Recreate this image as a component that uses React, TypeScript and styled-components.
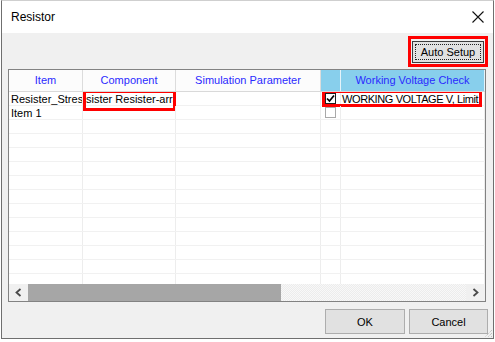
import React from 'react';
import styled, { createGlobalStyle } from 'styled-components';

const Global = createGlobalStyle`
  html, body { margin: 0; padding: 0; background: #ffffff; }
  body { font-family: "Liberation Sans", Arial, sans-serif; }
  * { box-sizing: border-box; }
`;

const COLS = '74px 93px 145px 20px 144px';

const Window = styled.div`
  margin-left: 1px;
  width: 493px;
  height: 339px;
  border: 1px solid #6f6f6f;
  border-top-color: #cfcfcf;
  display: flex;
  flex-direction: column;
  background: #f0f0f0;
`;

const TitleBar = styled.div`
  flex: none;
  height: 32px;
  background: #ffffff;
  display: flex;
  align-items: center;
  justify-content: space-between;
  padding: 0 9px 0 9px;
`;

const Title = styled.span`
  font-size: 12px;
  color: #000;
`;

const Body = styled.div`
  position: relative;
  flex: 1;
  display: flex;
  flex-direction: column;
  padding: 3px 5px 4px 6px;
  font-size: 11px;
`;

const Toolbar = styled.div`
  height: 31px;
  display: flex;
  justify-content: flex-end;
`;

const RedFrame = styled.div`
  width: 80px;
  height: 31px;
  border: 3px solid #ff0000;
  display: flex;
  align-items: center;
  justify-content: center;
`;

const Button = styled.button<{ $w: number; $default?: boolean }>`
  width: ${(p) => p.$w}px;
  height: ${(p) => (p.$default ? 22 : 25)}px;
  font-family: "Liberation Sans", Arial, sans-serif;
  font-size: 11px;
  color: #000;
  background: #e1e1e1;
  border: 1px solid ${(p) => (p.$default ? '#3c3c3c' : '#adadad')};
  padding: 0;
  outline: ${(p) => (p.$default ? '1px dotted #222' : 'none')};
  outline-offset: -4px;
`;

const Grid = styled.div`
  height: 233px;
  margin: 2px 2px 0 0;
  border: 1px solid #828282;
  background: #ffffff;
  display: flex;
  flex-direction: column;
  overflow: hidden;
`;

const HeaderRow = styled.div`
  flex: none;
  height: 22px;
  display: grid;
  grid-template-columns: ${COLS};
  border-bottom: 1px solid #d9d9d9;
`;

const HeaderCell = styled.div<{ $blue?: boolean }>`
  display: flex;
  align-items: center;
  justify-content: center;
  padding-bottom: 1px;
  color: #2a2aff;
  white-space: nowrap;
  overflow: hidden;
  background: ${(p) => (p.$blue ? '#88cfec' : '#fcfcfc')};
  border-right: 1px solid ${(p) => (p.$blue ? '#e4f3fa' : '#dcdcdc')};
`;

const Rows = styled.div`
  flex: 1;
  overflow: hidden;
`;

const Row = styled.div`
  position: relative;
  height: 14px;
  display: grid;
  grid-template-columns: ${COLS};
  border-bottom: 1px solid #f1f1f1;
`;

const Cell = styled.div<{ $pad?: number; $tight?: boolean }>`
  padding-left: ${(p) => p.$pad ?? 2}px;
  line-height: 14px;
  white-space: nowrap;
  overflow: hidden;
  color: #000;
  letter-spacing: ${(p) => (p.$tight ? '-0.4px' : 'normal')};
  border-right: 1px solid #ededed;
`;

const CheckCell = styled.div`
  border-right: 1px solid #ededed;
  display: flex;
  justify-content: flex-start;
  padding: 1px 0 0 4px;
`;

const Box = styled.div<{ $checked?: boolean }>`
  width: 11px;
  height: 11px;
  border: 1px solid ${(p) => (p.$checked ? '#1e1e1e' : '#a9a9a9')};
  background: #fff;
  display: flex;
  align-items: center;
  justify-content: center;
`;

const Highlight = styled.div<{ $l: number; $t: number; $w: number; $h: number }>`
  position: absolute;
  left: ${(p) => p.$l}px;
  top: ${(p) => p.$t}px;
  width: ${(p) => p.$w}px;
  height: ${(p) => p.$h}px;
  border: 3px solid #ff0000;
  pointer-events: none;
`;

const ScrollBar = styled.div`
  flex: none;
  height: 17px;
  display: flex;
  background: #f0f0f0;
`;

const Arrow = styled.div`
  width: 19px;
  display: flex;
  align-items: center;
  justify-content: center;
  background: #f0f0f0;
`;

const Track = styled.div`
  flex: 1;
  display: flex;
  background: repeating-conic-gradient(#ececec 0 25%, #f8f8f8 0 50%) 0 0 / 2px 2px;
`;

const Thumb = styled.div`
  width: 253px;
  background: #a6a6a6;
`;

const Footer = styled.div`
  margin-top: 7px;
  display: flex;
  justify-content: flex-end;
  gap: 4px;
`;

const Grip = styled.svg`
  position: absolute;
  right: 0;
  bottom: 0;
`;

const CloseIcon = () => (
  <svg width="12" height="12" viewBox="0 0 12 12">
    <path d="M0.5 0.5 L11.5 11.5 M11.5 0.5 L0.5 11.5" stroke="#111" strokeWidth="1.1" fill="none" />
  </svg>
);

const Chevron = ({ right }: { right?: boolean }) => (
  <svg width="7" height="9" viewBox="0 0 7 9">
    <path
      d={right ? 'M1.5 1 L5.5 4.5 L1.5 8' : 'M5.5 1 L1.5 4.5 L5.5 8'}
      stroke="#4a4a4a"
      strokeWidth="1.8"
      fill="none"
    />
  </svg>
);

const Tick = () => (
  <svg width="9" height="9" viewBox="0 0 9 9">
    <path d="M1 4.5 L3.5 7 L8 1.5" stroke="#000" strokeWidth="1.7" fill="none" />
  </svg>
);

const EMPTY_ROWS = 12;

export default function App() {
  return (
    <>
      <Global />
      <Window>
        <TitleBar>
          <Title>Resistor</Title>
          <CloseIcon />
        </TitleBar>
        <Body>
          <Toolbar>
            <RedFrame>
              <Button $w={72} $default>
                Auto Setup
              </Button>
            </RedFrame>
          </Toolbar>
          <Grid>
            <HeaderRow>
              <HeaderCell>Item</HeaderCell>
              <HeaderCell>Component</HeaderCell>
              <HeaderCell>Simulation Parameter</HeaderCell>
              <HeaderCell $blue />
              <HeaderCell $blue>Working Voltage Check</HeaderCell>
            </HeaderRow>
            <Rows>
              <Row>
                <Cell>Resister_Stress</Cell>
                <Cell $pad={3}>sister Resister-array</Cell>
                <Cell />
                <CheckCell>
                  <Box $checked>
                    <Tick />
                  </Box>
                </CheckCell>
                <Cell $pad={1} $tight>
                  WORKING VOLTAGE V, Limit
                </Cell>
                <Highlight $l={74} $t={-2} $w={93} $h={21} />
                <Highlight $l={313} $t={-2} $w={160} $h={17} />
              </Row>
              <Row>
                <Cell>Item 1</Cell>
                <Cell />
                <Cell />
                <CheckCell>
                  <Box />
                </CheckCell>
                <Cell />
              </Row>
              {Array.from({ length: EMPTY_ROWS }).map((_, i) => (
                <Row key={i}>
                  <Cell />
                  <Cell />
                  <Cell />
                  <Cell />
                  <Cell />
                </Row>
              ))}
            </Rows>
            <ScrollBar>
              <Arrow>
                <Chevron />
              </Arrow>
              <Track>
                <Thumb />
              </Track>
              <Arrow>
                <Chevron right />
              </Arrow>
            </ScrollBar>
          </Grid>
          <Footer>
            <Button $w={80}>OK</Button>
            <Button $w={79}>Cancel</Button>
          </Footer>
          <Grip width="9" height="9" viewBox="0 0 9 9">
            <path d="M8 1 L1 8 M8 4 L4 8 M8 7 L7 8" stroke="#b0b0b0" strokeWidth="1" strokeDasharray="1 1" fill="none" />
          </Grip>
        </Body>
      </Window>
    </>
  );
}
